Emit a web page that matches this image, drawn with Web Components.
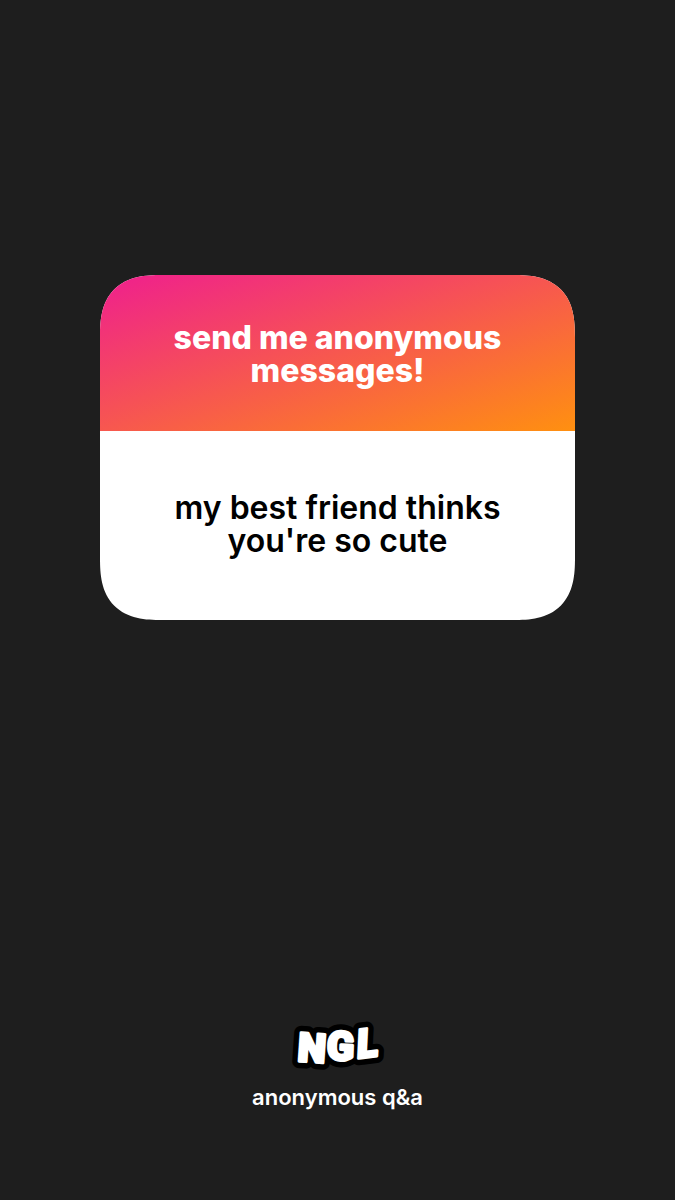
<!DOCTYPE html>
<html lang="en">
<head>
    <meta charset="UTF-8">
    <meta name="viewport" content="width=device-width, initial-scale=1.0">
    <title>anonymous q&amp;a</title>
    <style>
        body {
            margin: 0;
            background-color: #1e1e1e;
            font-family: Inter, "Liberation Sans", sans-serif;
        }
    </style>
</head>
<body>
    <story-page>
        <question-card>
            <span slot="prompt">send me anonymous messages!</span>
            <span slot="message">my best friend thinks you're so cute</span>
        </question-card>
        <brand-footer slot="footer">anonymous q&amp;a</brand-footer>
    </story-page>
<script>
    // Full height page with the card above and the brand at the bottom
    class StoryPage extends HTMLElement {
        constructor() {
            super();
            const shadow = this.attachShadow({ mode: 'open' });
            shadow.innerHTML = `
                <style>
                    :host {
                        display: flex;
                        flex-direction: column;
                        justify-content: space-between;
                        gap: 48px;
                        box-sizing: border-box;
                        min-height: 100vh;
                        padding: 275px 24px 89px;
                    }

                    main {
                        width: 100%;
                        max-width: 475px;
                        margin: 0 auto;
                    }
                </style>
                <main><slot></slot></main>
                <slot name="footer"></slot>
            `;
        }
    }

    // Card with a gradient prompt and the received message under it
    class QuestionCard extends HTMLElement {
        constructor() {
            super();
            const shadow = this.attachShadow({ mode: 'open' });
            shadow.innerHTML = `
                <style>
                    :host {
                        display: block;
                        overflow: hidden;
                        border-radius: 48px;
                        background-color: #fff;
                        font-size: 32px;
                        line-height: 33px;
                        text-align: center;
                    }

                    /* Smoother corners where the browser has them */
                    @supports (corner-shape: superellipse(1.4)) {
                        :host {
                            border-radius: 62px;
                            corner-shape: superellipse(1.4);
                        }
                    }

                    h1, p {
                        margin: 0;
                        font-size: inherit;
                    }

                    h1 {
                        padding: 46px 64px 44px;
                        color: #fff;
                        font-weight: 800;
                        background: linear-gradient(to bottom right, #ef1f8e, #ff9010);
                    }

                    p {
                        padding: 60px 64px 63px;
                        color: #000;
                        font-weight: 600;
                    }
                </style>
                <h1><slot name="prompt"></slot></h1>
                <p><slot name="message"></slot></p>
            `;
        }
    }

    // Logo lettering with a thick outline, and the tagline
    class BrandFooter extends HTMLElement {
        constructor() {
            super();
            const shadow = this.attachShadow({ mode: 'open' });
            shadow.innerHTML = `
                <style>
                    :host {
                        display: flex;
                        flex-direction: column;
                        align-items: center;
                        color: #fff;
                        font-size: 22px;
                        font-weight: 600;
                        line-height: 28px;
                    }

                    svg {
                        display: block;
                    }

                    text {
                        font-family: Roboto, sans-serif;
                        font-size: 40px;
                        font-weight: 900;
                        text-anchor: middle;
                        stroke-linejoin: round;
                    }

                    .outline {
                        fill: #000;
                        stroke: #000;
                        stroke-width: 14px;
                    }

                    .face {
                        fill: #fff;
                        stroke: #fff;
                        stroke-width: 3px;
                    }

                    .slanted {
                        font-style: italic;
                    }
                </style>
                <svg width="112" height="76" viewBox="0 0 112 76" role="img" aria-label="NGL">
                    <g class="outline" aria-hidden="true">
                        <text transform="translate(29 55) rotate(4)">N</text>
                        <text transform="translate(58 53) rotate(2)">G</text>
                        <text class="slanted" transform="translate(87 50) rotate(-7)">L</text>
                    </g>
                    <g class="face">
                        <text transform="translate(29 55) rotate(4)">N</text>
                        <text transform="translate(58 53) rotate(2)">G</text>
                        <text class="slanted" transform="translate(87 50) rotate(-7)">L</text>
                    </g>
                </svg>
                <div><slot></slot></div>
            `;
        }
    }

    customElements.define('story-page', StoryPage);
    customElements.define('question-card', QuestionCard);
    customElements.define('brand-footer', BrandFooter);
</script>
</body>
</html>
